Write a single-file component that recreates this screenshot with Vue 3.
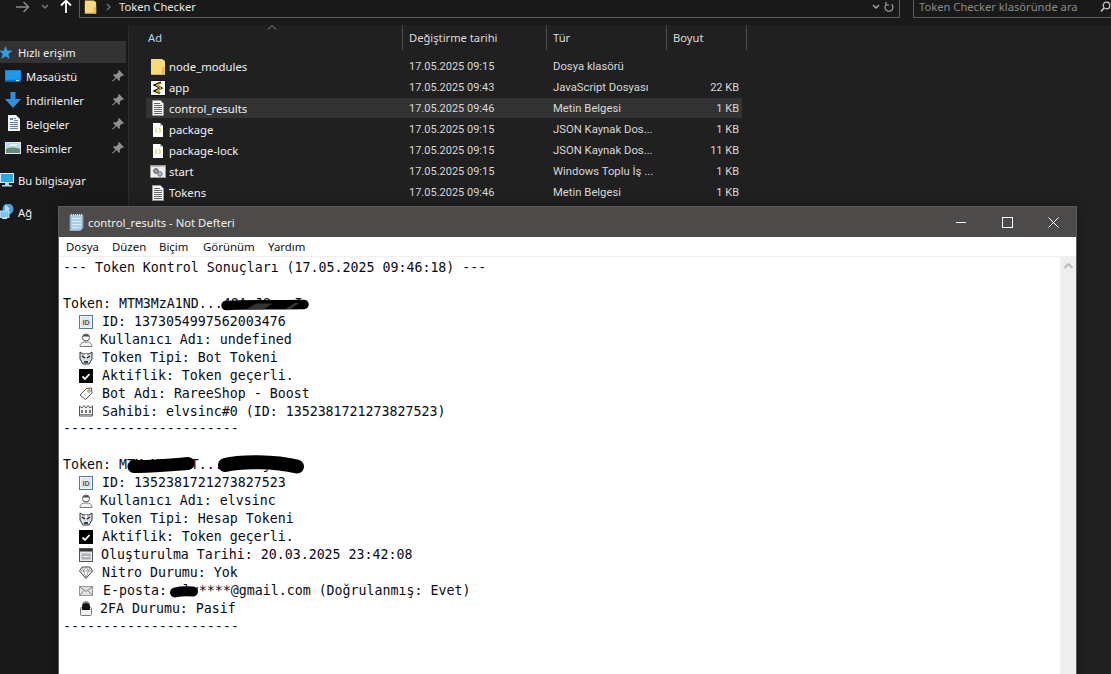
<script setup>
const side = [
  { t: 'Hızlı erişim', i: 'star', cls: 'sel' },
  { t: 'Masaüstü', i: 'desk', pin: true, cls: 'sub' },
  { t: 'İndirilenler', i: 'down', pin: true, cls: 'sub' },
  { t: 'Belgeler', i: 'docs', pin: true, cls: 'sub' },
  { t: 'Resimler', i: 'pics', pin: true, cls: 'sub' },
  { t: 'Bu bilgisayar', i: 'pc', cls: 'pcrow' },
  { t: 'Ağ', i: 'net', cls: 'netrow' }
]
const files = [
  { n: 'node_modules', d: '17.05.2025 09:15', k: 'Dosya klasörü', s: '', i: 'folder' },
  { n: 'app', d: '17.05.2025 09:43', k: 'JavaScript Dosyası', s: '22 KB', i: 'js' },
  { n: 'control_results', d: '17.05.2025 09:46', k: 'Metin Belgesi', s: '1 KB', i: 'txt', hl: true },
  { n: 'package', d: '17.05.2025 09:15', k: 'JSON Kaynak Dos...', s: '1 KB', i: 'json' },
  { n: 'package-lock', d: '17.05.2025 09:15', k: 'JSON Kaynak Dos...', s: '11 KB', i: 'json' },
  { n: 'start', d: '17.05.2025 09:15', k: 'Windows Toplu İş ...', s: '1 KB', i: 'bat' },
  { n: 'Tokens', d: '17.05.2025 09:46', k: 'Metin Belgesi', s: '1 KB', i: 'txt' }
]
const lines = [
  { t: '--- Token Kontrol Sonuçları (17.05.2025 09:46:18) ---' },
  { t: ' ' },
  { t: 'Token: MTM3MzA1ND...48A J8   I' },
  { i: 'idc', x: 102, t: 'ID: 1373054997562003476' },
  { i: 'user', x: 100, t: 'Kullanıcı Adı: undefined' },
  { i: 'bot', x: 102, t: 'Token Tipi: Bot Tokeni' },
  { i: 'check', x: 102, t: 'Aktiflik: Token geçerli.' },
  { i: 'tag', x: 102, t: 'Bot Adı: RareeShop - Boost' },
  { i: 'crown', x: 102, t: 'Sahibi: elvsinc#0 (ID: 1352381721273827523)' },
  { t: '----------------------' },
  { t: ' ' },
  { t: 'Token: MTMzNTIzOT...OTAxLjll' },
  { i: 'idc', x: 102, t: 'ID: 1352381721273827523' },
  { i: 'user', x: 100, t: 'Kullanıcı Adı: elvsinc' },
  { i: 'bot', x: 102, t: 'Token Tipi: Hesap Tokeni' },
  { i: 'check', x: 102, t: 'Aktiflik: Token geçerli.' },
  { i: 'cal', x: 101, t: 'Oluşturulma Tarihi: 20.03.2025 23:42:08' },
  { i: 'gem', x: 102, t: 'Nitro Durumu: Yok' },
  { i: 'mail', x: 103, t: 'E-posta: elv****@gmail.com (Doğrulanmış: Evet)' },
  { i: 'lock', x: 100, t: '2FA Durumu: Pasif' },
  { t: '----------------------' }
]
const menus = [
  { t: 'Dosya', w: 46 },
  { t: 'Düzen', w: 47 },
  { t: 'Biçim', w: 44 },
  { t: 'Görünüm', w: 65 },
  { t: 'Yardım', w: 50 }
]
</script>

<template>
  <div class="screen">
    <svg class="defs" aria-hidden="true">
      <symbol id="folder" viewBox="0 0 16 16"><path d="M1 0h11l3 2v14H1z" fill="#f9d978"/><path d="M12 16V8h3v8z" fill="#e9bd55"/><path d="M1 15h14v1H1z" fill="#dcb050"/></symbol>
      <symbol id="js" viewBox="0 0 16 16"><rect x=".5" y=".5" width="15" height="15" fill="#fff" stroke="#111"/><path d="M11 2.500 5 5l6 3-6 3 5 2" fill="none" stroke="#111" stroke-width="2.200"/><path d="M10.500 3.500 6 5.200l5 2.800-5 3 3.500 1.500" fill="none" stroke="#f0e000" stroke-width="1"/></symbol>
      <symbol id="txt" viewBox="0 0 16 16"><path d="M2.500.5h8l3 3v12h-11z" fill="#fbfbfb" stroke="#9a9a9a"/><path d="M4 3.500h6M4 5.500h8M4 7.500h8M4 9.500h8M4 11.500h8M4 13.500h8" stroke="#666" stroke-width="1"/></symbol>
      <symbol id="json" viewBox="0 0 16 16"><path d="M3 1h7l3 3v11H3z" fill="#fff"/><path d="M10 1v3h3z" fill="#bbb"/><path d="M6.500 6C5.600 7.500 5.600 9.500 6.500 11M9.500 6c.9 1.500.9 3.500 0 5" fill="none" stroke="#cfc22e" stroke-width="1"/></symbol>
      <symbol id="bat" viewBox="0 0 16 16"><rect x=".5" y="1.500" width="15" height="12" fill="#eee" stroke="#9a9a9a"/><path d="M1 2h14v1H1z" fill="#bbb"/><circle cx="6" cy="7" r="2.400" fill="#999" stroke="#666"/><circle cx="10" cy="10" r="2.200" fill="#a9c3d8" stroke="#678"/></symbol>
      <symbol id="star" viewBox="0 0 14 14"><path d="M6 0 8 5l5.500.2L9 8.500l1.500 5.500L6 11l-4.500 3L3 8.500-1 5.200 4 5z" fill="#2ba1ea"/></symbol>
      <symbol id="desk" viewBox="0 0 16 12"><rect width="16" height="12" fill="#0a86e0"/><rect x="1" y="1" width="14" height="8.500" fill="#1c9af0"/><path d="M0 10.500h16V12H0z" fill="#0c5fa8"/><path d="M11 10h3v1h-3z" fill="#cfe8fb"/></symbol>
      <symbol id="down" viewBox="0 0 16 16"><path d="M5.500 0h5v7H16l-8 9-8-9h5.500z" fill="#2f8fe0"/></symbol>
      <symbol id="docs" viewBox="0 0 12 16"><path d="M0 0h8l4 4v12H0z" fill="#f4f4f4"/><path d="M2 3h3v2H2z" fill="#2f8fe0"/><path d="M6 3.500h2M6 5.500h4M2 7.500h8M2 9.500h8M2 11.500h8M2 13.500h8" stroke="#5f87b0"/></symbol>
      <symbol id="pics" viewBox="0 0 16 12"><rect width="16" height="12" fill="#e8e8e8"/><rect x="1" y="1" width="14" height="10" fill="#b9dbe9"/><path d="M1 7c4-2 8-2 14 0v4H1z" fill="#5f8d72"/><path d="M5 2h7v2H5z" fill="#e4f2f6"/></symbol>
      <symbol id="pc" viewBox="0 0 14 14"><rect y="0" width="14" height="10" fill="#cfe9f7"/><rect x="1" y="1" width="12" height="8" fill="#28a6e6"/><path d="M5 10h4v2H5zM2 12h10v1.500H2z" fill="#bdd6e4"/></symbol>
      <symbol id="net" viewBox="0 0 14 16"><circle cx="8" cy="5" r="5.500" fill="#4ea0d8"/><path d="M5 1c3 1 5 3 4 5L5 7z" fill="#bcdcf0"/><rect y="7" width="9" height="6.500" fill="#7cc7ee" stroke="#d5edf9" stroke-width=".8"/><path d="M2 14.500h5" stroke="#cfe3ef"/></symbol>
      <symbol id="pin" viewBox="0 0 12 12"><path d="M7 0l5 5-1 1-1-.5L7.500 8l.5 2-1 1-2.500-3L1 11.500 0 11l3.500-3.500L1 5l1-1 2 .5L6.500 2 6 1z" fill="#8f8f8f"/></symbol>
      <symbol id="note" viewBox="0 0 16 18"><path d="M2 2h13v13l-3 3H2z" fill="#a9cfe8" stroke="#7a8f9f"/><path d="M4 5.500h9M4 8.500h9M4 11.500h9M4 14.500h7" stroke="#d9edf8"/><path d="M3.500 1v2M5.500 1v2M7.500 1v2M9.500 1v2M11.500 1v2M13.500 1v2" stroke="#dfe7ee"/></symbol>
      <symbol id="user" viewBox="0 0 14 14"><circle cx="7" cy="4.500" r="3.500" fill="#fff" stroke="#555"/><path d="M3.500 3.500C5 1 9 1 10.500 3.500z" fill="#444"/><path d="M1 13.500c0-3.500 2.500-4.500 6-4.500s6 1 6 4.500z" fill="#f4f4f4" stroke="#777"/></symbol>
      <symbol id="bot" viewBox="0 0 14 14"><path d="M1 1l3 2h6l3-2v7l-3 5H4L1 8z" fill="#d8dee8" stroke="#333"/><path d="M3 5l3 2M11 5L8 7" stroke="#222" stroke-width="1.500"/><path d="M5 10h4v2H5z" fill="#345"/><path d="M6 3h2v3H6z" fill="#fff"/></symbol>
      <symbol id="check" viewBox="0 0 14 14"><rect width="14" height="14" fill="#000"/><path d="M3.500 7.500 6 10l4.500-5" fill="none" stroke="#fff" stroke-width="1.800"/></symbol>
      <symbol id="tag" viewBox="0 0 14 14"><path d="M1 8l6.500-6.500L12.500 1l.5 5L6.500 12.500z" fill="#fff" stroke="#555"/><circle cx="10" cy="4" r="1.300" fill="#fff" stroke="#a0794a"/><path d="M5 7l2 2" stroke="#bbb"/></symbol>
      <symbol id="crown" viewBox="0 0 14 12"><path d="M.5 1 3 3l2-2.500L7 3l2-2.500L11 3l2.500-2v10H.5z" fill="#f3f3f3" stroke="#555"/><path d="M2 5h2v3H2zM6 5h2v3H6zM10 5h2v3h-2z" fill="#777"/><path d="M1 9.500h12" stroke="#888"/></symbol>
      <symbol id="cal" viewBox="0 0 14 14"><rect x=".5" y=".5" width="13" height="13" fill="#e6e6e6" stroke="#555"/><path d="M1 1h12v2.500H1z" fill="#333"/><rect x="2.500" y="5.500" width="9" height="6" fill="#aab2ba"/><path d="M4 8.500h6" stroke="#f1f1f1"/></symbol>
      <symbol id="gem" viewBox="0 0 14 13"><path d="M3 1h8l2.500 4L7 12.500.5 5z" fill="#fff" stroke="#444"/><path d="M1 5h12M4.500 5 7 12l2.500-7M3 1l1.500 4L7 1l2.500 4L11 1" fill="none" stroke="#888" stroke-width=".8"/></symbol>
      <symbol id="mail" viewBox="0 0 16 11"><rect x=".5" y=".5" width="15" height="10" fill="#e3e3e3" stroke="#888"/><path d="M1 1l7 5 7-5M1 10l5-5M15 10l-5-5" fill="none" stroke="#777"/></symbol>
      <symbol id="lock" viewBox="0 0 12 15"><path d="M3 7V4c0-4 6-4 6 0v3" fill="none" stroke="#777" stroke-width="1.500"/><rect x=".5" y="6.500" width="11" height="8" rx="1" fill="#f2f2f2" stroke="#777"/><path d="M2 5c1-4 7-4 8 0v4H2z" fill="#111"/></symbol>
    </svg>

    <header class="topbar">
      <div class="nav">
        <svg class="nav-fwd" width="14" height="12" viewBox="0 0 14 12"><path d="M0 6h12M7.500 1l5 5-5 5" fill="none" stroke="#8a8a8a" stroke-width="1.500"/></svg>
        <svg class="nav-drop" width="8" height="6" viewBox="0 0 8 6"><path d="M1 1l3 3 3-3" fill="none" stroke="#777" stroke-width="1.500"/></svg>
        <svg class="nav-up" width="12" height="14" viewBox="0 0 12 14"><path d="M6 14V2M1 6.500l5-5 5 5" fill="none" stroke="#fff" stroke-width="1.800"/></svg>
      </div>
      <div class="address">
        <svg class="crumb-ic"><use href="#folder" /></svg>
        <svg class="crumb-sep" width="5" height="8" viewBox="0 0 5 8"><path d="M1 1l3 3-3 3" fill="none" stroke="#777" stroke-width="1.200"/></svg>
        <span class="crumb">Token Checker</span>
        <span class="spacer"></span>
        <svg width="8" height="6" viewBox="0 0 8 6"><path d="M1 1l3 3 3-3" fill="none" stroke="#aaa" stroke-width="1.400"/></svg>
        <svg class="refresh" width="10" height="12" viewBox="0 0 10 12"><path d="M7.500 3.200A4 4 0 1 1 2.500 3.200M2 1v3h3" fill="none" stroke="#aaa" stroke-width="1.100"/></svg>
      </div>
      <div class="search">
        <span>Token Checker klasöründe ara</span>
        <svg width="11" height="11" viewBox="0 0 11 11"><circle cx="6.500" cy="4.500" r="3.300" fill="none" stroke="#ccc" stroke-width="1.200"/><path d="M4 7l-3 3.500" stroke="#ccc" stroke-width="1.500"/></svg>
      </div>
    </header>

    <div class="body">
      <aside class="sidebar">
        <div v-for="s in side" :key="s.t" class="navitem" :class="s.cls">
          <svg class="nav-ic" :class="'nic-' + s.i"><use :href="'#' + s.i" /></svg>
          <span class="nav-text">{{ s.t }}</span>
          <svg v-if="s.pin" class="pin"><use href="#pin" /></svg>
        </div>
      </aside>
      <main class="list">
        <div class="cols">
          <div class="col c-name">Ad<svg class="sort" width="10" height="5" viewBox="0 0 10 5"><path d="M1 4.500l4-4 4 4" fill="none" stroke="#888"/></svg></div>
          <div class="col c-date">Değiştirme tarihi</div>
          <div class="col c-type">Tür</div>
          <div class="col c-size">Boyut</div>
        </div>
        <div class="rows">
          <div v-for="f in files" :key="f.n" class="row" :class="{ hl: f.hl }">
            <svg class="file-ic"><use :href="'#' + f.i" /></svg>
            <span class="r-name">{{ f.n }}</span>
            <span class="r-date">{{ f.d }}</span>
            <span class="r-type">{{ f.k }}</span>
            <span class="r-size">{{ f.s }}</span>
          </div>
        </div>
      </main>
    </div>

    <section class="notepad">
      <div class="titlebar">
        <svg class="note-ic"><use href="#note" /></svg>
        <span class="title">control_results - Not Defteri</span>
        <span class="spacer"></span>
        <div class="winbtn"><svg width="11" height="11" viewBox="0 0 11 11"><path d="M0 5.500h10" stroke="#fff"/></svg></div>
        <div class="winbtn"><svg width="11" height="11" viewBox="0 0 11 11"><rect x=".5" y=".5" width="10" height="10" fill="none" stroke="#fff"/></svg></div>
        <div class="winbtn"><svg width="11" height="11" viewBox="0 0 11 11"><path d="M.5.500l10 10M10.500.500l-10 10" stroke="#fff"/></svg></div>
      </div>
      <nav class="menubar">
        <span v-for="m in menus" :key="m.t" class="menu" :style="{ width: m.w + 'px' }">{{ m.t }}</span>
      </nav>
      <div class="content">
        <div class="editor">
          <div v-for="(l, idx) in lines" :key="idx" class="line" :class="{ indented: l.i }">
            <svg v-if="l.i === 'idc'" class="emo" viewBox="0 0 14 14"><rect x=".5" y=".5" width="13" height="13" fill="#f5f7fa" stroke="#4f79b0"/><rect x="2" y="2" width="10" height="10" fill="#e3e7ec"/><text x="7" y="9.600" text-anchor="middle" font-family="Liberation Sans, sans-serif" font-size="7" font-weight="700" fill="#555">ID</text></svg>
            <svg v-else-if="l.i" class="emo" :class="'emo-' + l.i"><use :href="'#' + l.i" /></svg>
            <span :style="l.i ? { marginLeft: (l.x - 95) + 'px' } : null">{{ l.t }}</span>
          </div>
          <svg class="scribbles" viewBox="59 257 1001 420" aria-hidden="true">
            <path d="M226 305.500C240 304 270 305 304 304.500" fill="none" stroke="#000" stroke-width="9.500" stroke-linecap="round"/>
            <path d="M246 309.500 256 303.500H273L263 309.500zM285 309l10-6h4l-8 6z" fill="#333"/>
            <path d="M134 466.500C150 467 170 465 188 463.500" fill="none" stroke="#000" stroke-width="13" stroke-linecap="round"/>
            <path d="M225 465C240 461 275 461 297 466.500" fill="none" stroke="#000" stroke-width="14" stroke-linecap="round"/>
            <path d="M175 592.500C181 591 187 591 193 591.500" fill="none" stroke="#000" stroke-width="10" stroke-linecap="round"/>
          </svg>
        </div>
        <div class="scrollbar">
          <svg width="9" height="6" viewBox="0 0 9 6"><path d="M.5 5 4.500 1l4 4" fill="none" stroke="#bcbcbc" stroke-width="2"/></svg>
        </div>
      </div>
    </section>
  </div>
</template>

<style>
html, body { background: #191919; }
</style>

<style scoped>
.screen {
  position: relative;
  width: 1111px;
  height: 674px;
  overflow: hidden;
  background: #191919;
  font-family: "Noto Sans", "Open Sans", sans-serif;
  font-size: 11.2px;
  color: #f0f0f0;
}
.defs { position: absolute; width: 0; height: 0; }
.spacer { flex: 1; }

.topbar { display: flex; height: 25px; }
.nav { width: 79px; height: 13px; position: relative; display: flex; align-items: center; }
.nav-fwd { margin-left: 16px; }
.nav-drop { margin-left: 11px; }
.nav-up { margin-left: 11px; margin-top: -1px; }
.address {
  width: 821px;
  height: 18px;
  box-sizing: border-box;
  border-left: 1px solid #5c5c5c;
  border-right: 1px solid #5c5c5c;
  border-bottom: 1px solid #5c5c5c;
  display: flex;
  align-items: center;
  padding: 0 5px 4px 4px;
}
.crumb-ic { width: 13px; height: 14px; }
.crumb-sep { margin-left: 9px; }
.crumb { margin-left: 8px; color: #e8e8e8; }
.refresh { margin-left: 4px; }
.search {
  margin-left: 13px;
  width: 198px;
  height: 18px;
  box-sizing: border-box;
  border-left: 1px solid #5c5c5c;
  border-bottom: 1px solid #5c5c5c;
  display: flex;
  align-items: center;
  justify-content: space-between;
  padding: 0 0 4px 5px;
  color: #8a8a8a;
}

.body { display: flex; height: 649px; }
.sidebar { width: 129px; padding-top: 16px; box-sizing: border-box; border-right: 1px solid #2b2b2b; }
.navitem { height: 24px; display: flex; align-items: center; position: relative; padding-left: 26px; }
.navitem.sel { height: 22px; width: 126px; box-sizing: border-box; padding-left: 18px; background: #333; margin-bottom: 1px; }
.navitem.pcrow { padding-left: 18px; margin-top: 8px; }
.navitem.netrow { padding-left: 18px; margin-top: 8px; }
.nav-ic { position: absolute; left: 5px; top: 4px; width: 16px; height: 16px; }
.nic-star { left: 0; top: 5px; width: 13px; height: 13px; }
.nic-desk { top: 6px; height: 12px; }
.nic-down { top: 4px; }
.nic-docs { left: 8px; width: 12px; top: 3px; }
.nic-pics { top: 6px; height: 12px; }
.nic-pc { left: 0; width: 14px; height: 14px; top: 5px; }
.nic-net { left: 0; width: 14px; top: 4px; }
.pin { position: absolute; left: 112px; top: 6px; width: 12px; height: 12px; }

.list { flex: 1; background: #202020; }
.cols { display: flex; height: 25px; }
.col {
  box-sizing: border-box;
  height: 25px;
  display: flex;
  align-items: center;
  color: #dcdcdc;
  border-right: 1px solid #4a4a4a;
  position: relative;
  padding-left: 6px;
}
.c-name { width: 274px; padding-left: 19px; color: #b7d4ee; }
.c-date { width: 144px; }
.c-type { width: 120px; }
.c-size { width: 80px; }
.sort { position: absolute; left: 138px; top: 0; }
.rows { padding: 6px 0 0 17px; }
.row {
  display: flex;
  align-items: center;
  height: 21px;
  width: 596px;
  position: relative;
}
.row.hl { background: #333; height: 20px; margin-bottom: 1px; }
.file-ic { width: 16px; height: 16px; margin-left: 4px; flex: none; }
.r-name { width: 240px; margin-left: 3px; color: #f2f2f2; font-size: 11.3px; }
.r-date { width: 144px; color: #d8d8d8; font-size: 11px; font-family: "Roboto", sans-serif; }
.r-type { width: 120px; color: #d8d8d8; font-size: 11.3px; font-family: "Roboto", sans-serif; }
.r-size { width: 66px; text-align: right; color: #d8d8d8; font-size: 11px; font-family: "Roboto", sans-serif; }

.notepad {
  position: absolute;
  left: 58px;
  top: 206px;
  width: 1019px;
  height: 480px;
  box-sizing: border-box;
  border: 1px solid #5a5a5a;
  border-bottom: 0;
  display: flex;
  flex-direction: column;
  background: #fff;
  box-shadow: 0 0 12px rgba(0, 0, 0, 0.3);
}
.titlebar { height: 30px; flex: none; background: #4c4b49; display: flex; align-items: center; padding-left: 9px; }
.note-ic { width: 16px; height: 18px; }
.title { margin-left: 4px; font-size: 11.3px; color: #f0f0f0; }
.winbtn { width: 46px; height: 30px; display: flex; align-items: center; justify-content: center; }
.menubar {
  height: 19px;
  flex: none;
  background: #fff;
  display: flex;
  align-items: center;
  padding-left: 7px;
  font-size: 11.4px;
  color: #111;
}
.content { flex: 1; display: flex; border-top: 1px solid #f0f0f0; min-height: 0; }
.editor {
  flex: 1;
  position: relative;
  padding: 2px 0 0 4px;
  background: #fff;
  font-family: "DejaVu Sans Mono", "Liberation Mono", monospace;
  font-size: 13.28px;
  line-height: 17.95px;
  color: #0a0a14;
}
.line { height: 17.95px; white-space: pre; display: flex; align-items: center; }
.line.indented { padding-left: 16px; }
.emo { width: 14px; height: 14px; flex: none; margin-right: 2px; }
.emo-gem { height: 13px; }
.emo-mail { width: 14px; height: 10px; }
.emo-lock { width: 12px; height: 15px; margin-left: 1px; margin-right: 3px; }
.emo-crown { height: 12px; }
.scribbles { position: absolute; left: 0; top: 0; width: 1001px; height: 420px; pointer-events: none; }
.scrollbar { width: 16px; flex: none; background: #eeeeee; display: flex; justify-content: center; align-items: flex-start; padding-top: 6px; box-sizing: border-box; }
</style>
